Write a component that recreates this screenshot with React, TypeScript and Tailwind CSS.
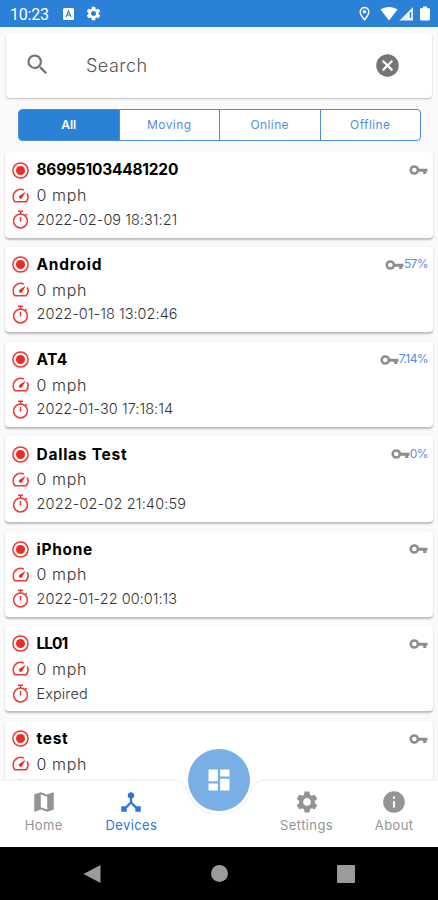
import {
  MdCancel,
  MdDashboard,
  MdDeviceHub,
  MdInfo,
  MdMap,
  MdSearch,
  MdSettings,
} from "react-icons/md";

interface Device {
  name: string;
  time: string;
  battery?: string;
  nameClass: string;
  timeClass: string;
}

const devices: Device[] = [
  { name: "869951034481220", time: "2022-02-09 18:31:21", nameClass: "tracking-[-0.23px]", timeClass: "tracking-[0.03px]" },
  { name: "Android", time: "2022-01-18 13:02:46", battery: "57%", nameClass: "tracking-[0.75px]", timeClass: "tracking-[0.03px]" },
  { name: "AT4", time: "2022-01-30 17:18:14", battery: "7.14%", nameClass: "tracking-[0.4px]", timeClass: "tracking-[0.03px]" },
  { name: "Dallas Test", time: "2022-02-02 21:40:59", battery: "0%", nameClass: "tracking-[0.75px]", timeClass: "tracking-[0.15px]" },
  { name: "iPhone", time: "2022-01-22 00:01:13", nameClass: "tracking-[0.7px]", timeClass: "tracking-[0.03px]" },
  { name: "LL01", time: "Expired", nameClass: "tracking-[-1px]", timeClass: "tracking-[0.1px]" },
  { name: "test", time: "2022-01-22 00:01:13", nameClass: "tracking-[0.7px]", timeClass: "tracking-[0.03px]" },
];

function StatusIcon() {
  return (
    <svg width="19" height="19" viewBox="0 0 19 19" fill="none">
      <circle cx="9.500" cy="9.500" r="7.600" stroke="#ee3a34" strokeWidth="1.500" />
      <circle cx="9.500" cy="9.500" r="4.500" fill="#ee2a24" />
    </svg>
  );
}

function SpeedIcon() {
  return (
    <svg width="19" height="19" viewBox="0 0 19 19" fill="none" stroke="#ee3a34" strokeWidth="1.600">
      <path d="M12.800 4.100A7.500 7.500 0 0 0 3.900 15.700H15.100A7.500 7.500 0 0 0 16.200 7.400" strokeLinejoin="round" />
      <path d="M14.800 5.800L10.900 12.200A1.700 1.700 0 1 1 8.500 9.800z" fill="#ee2a24" stroke="none" />
    </svg>
  );
}

function TimerIcon() {
  return (
    <svg width="19" height="19" viewBox="0 0 19 19" fill="none" stroke="#ee3a34" strokeWidth="1.500">
      <circle cx="9.500" cy="11" r="6.900" />
      <path d="M7 1.300H12M9.500 1.500V4M9.500 7V11.500M14.200 5.500L15.700 4" />
    </svg>
  );
}

function KeyIcon() {
  return (
    <svg width="19" height="12" viewBox="0 0 19 12" fill="none">
      <circle cx="5.300" cy="6" r="3.600" stroke="#8d8d8d" strokeWidth="2.500" />
      <path d="M9 4.700H18.500V7.700H17.300V10H14.200V7.700H9z" fill="#8d8d8d" />
    </svg>
  );
}

function StatusBar() {
  return (
    <div className="h-[27px] shrink-0 bg-[#2b80d8] text-white flex items-center pl-[10px] pr-2">
      <span className="font-[Roboto] text-[16px] leading-none w-[53px] pt-[2px] tracking-[-0.2px]">10:23</span>
      <svg width="11" height="12" viewBox="0 0 11 12">
        <rect width="11" height="12" rx="1.5" fill="white" />
        <path d="M3 9L5.5 3L8 9M4 7H7" stroke="#2b80d8" strokeWidth="1.1" fill="none" />
      </svg>
      <MdSettings size={17} className="ml-[11px]" />
      <svg width="71" height="16" viewBox="0 0 71 16" className="ml-auto">
        <path d="M5.500 1.500a4.300 4.300 0 0 1 4.300 4.300c0 3-4.300 7.900-4.300 7.900s-4.300-4.900-4.300-7.900a4.300 4.300 0 0 1 4.300-4.300z" fill="none" stroke="white" strokeWidth="1.500" />
        <circle cx="5.500" cy="5.800" r="1.800" fill="white" />
        <path d="M21.500 3.600C26 .1 34 .1 38.500 3.600L30 14.500z" fill="white" />
        <path d="M54 1v13.500H40.500z" fill="white" fillOpacity=".9" />
        <path d="M51.500 6v6" stroke="#2b80d8" strokeWidth="1.400" />
        <path d="M64 .5h4V2h1.500q1.500 0 1.500 1.500V13q0 1.500-1.500 1.500h-7Q61 14.500 61 13V3.500Q61 2 62.500 2H64z" fill="white" />
      </svg>
    </div>
  );
}

function SearchBox() {
  return (
    <div className="mt-[6px] mx-[6px] h-[65px] shrink-0 bg-white rounded-[4px] shadow-[0_1px_2px_rgba(0,0,0,0.25)] flex items-center pl-[18px] pr-[31px]">
      <MdSearch size={27} className="text-[#757575] mt-[-2px]" />
      <span className="ml-[35px] text-[18px] font-light tracking-[0.5px] text-[#555]">Search</span>
      <MdCancel size={27} className="ml-auto text-[#757575]" />
    </div>
  );
}

function Tabs() {
  const tabs = ["All", "Moving", "Online", "Offline"];
  return (
    <div className="mt-[11px] ml-[18px] mr-[17px] h-[32px] shrink-0 flex rounded-[4px] border border-[#4a8bdc] bg-white overflow-hidden text-[12px]">
      {tabs.map((tab, i) => (
        <div
          key={tab}
          className={
            i === 0
              ? "flex-1 flex items-center justify-center bg-[#2b80d8] text-white font-semibold pb-[1px]"
              : "flex-1 flex items-center justify-center text-[#5b8bdd] border-l border-[#4a8bdc] tracking-[0.4px] pb-[1px]"
          }
        >
          {tab}
        </div>
      ))}
    </div>
  );
}

function DeviceCard({ device }: { device: Device }) {
  return (
    <div className="h-[85.500px] last:h-[110px] shrink-0 bg-white rounded-[4px] shadow-[0_1.500px_2px_rgba(0,0,0,0.25)] pl-[6px] pr-[5px] pt-[5.500px] flex justify-between">
      <div>
        <div className="flex items-center h-[25px]">
          <StatusIcon />
          <span className={`ml-[6.500px] text-[15.500px] font-bold text-black ${device.nameClass}`}>{device.name}</span>
        </div>
        <div className="flex items-center h-[25px]">
          <SpeedIcon />
          <span className="ml-[6.500px] text-[16px] font-light text-[#333] tracking-[0.6px]">0 mph</span>
        </div>
        <div className="flex items-center h-[24px]">
          <TimerIcon />
          <span className={`ml-[6.500px] text-[14.500px] font-light text-[#333] ${device.timeClass}`}>{device.time}</span>
        </div>
      </div>
      <div className="flex items-center h-[25px]">
        <KeyIcon />
        {device.battery && (
          <span className="text-[12px] leading-none text-[#5b8be0] tracking-[-0.6px] mb-[1px]">{device.battery}</span>
        )}
      </div>
    </div>
  );
}

function BottomNav() {
  const items = [
    { label: "Home", icon: MdMap },
    { label: "Devices", icon: MdDeviceHub },
    null,
    { label: "Settings", icon: MdSettings },
    { label: "About", icon: MdInfo },
  ];
  return (
    <div className="absolute bottom-0 left-0 w-full h-[67px]">
      <svg width="438" height="67" viewBox="0 0 438 67" className="absolute inset-0 overflow-visible">
        <path d="M0 0H172C181 0 184 3 187 11C193 26 204 34.500 219 34.500S245 26 251 11C254 3 257 0 266 0H438V67H0z" fill="white" />
        <path
          d="M0 0H172C181 0 184 3 187 11C193 26 204 34.500 219 34.500S245 26 251 11C254 3 257 0 266 0H438"
          fill="none"
          stroke="#f3f3f3"
          strokeWidth="1.500"
        />
      </svg>
      <div className="relative h-full flex">
        {items.map((item, i) =>
          item ? (
            <div
              key={item.label}
              className={`flex-1 flex flex-col items-center pt-[9px] ${i === 1 ? "text-[#2c74d8]" : "text-[#949494]"}`}
            >
              <item.icon size={26} />
              <span className="text-[13px] leading-[20px] tracking-[0.4px]">{item.label}</span>
            </div>
          ) : (
            <div key="gap" className="flex-1" />
          )
        )}
      </div>
      <div className="absolute left-[188px] top-[-31px] size-[62px] rounded-full bg-[#7aafe5] text-white flex items-center justify-center">
        <MdDashboard size={28} />
      </div>
    </div>
  );
}

function SystemNav() {
  return (
    <div className="h-[53px] shrink-0 bg-black flex items-center justify-around px-[29px]">
      <svg width="18" height="20" viewBox="0 0 18 20" className="relative right-px">
        <path d="M17.500 1v18L.5 10z" fill="#9b9b9b" />
      </svg>
      <div className="size-[17px] rounded-full bg-[#9b9b9b]" />
      <div className="size-[18px] rounded-[1px] bg-[#9b9b9b]" />
    </div>
  );
}

function App() {
  return (
    <div className="w-[438px] h-[900px] bg-[#fafafa] flex flex-col overflow-hidden font-[Inter,sans-serif]">
      <StatusBar />
      <div className="relative flex-1 min-h-0 flex flex-col">
        <SearchBox />
        <Tabs />
        <div className="flex-1 min-h-0 overflow-hidden mt-[8px] px-[5px] pt-[3px] flex flex-col gap-[9.300px]">
          {devices.map((device) => (
            <DeviceCard key={device.name} device={device} />
          ))}
        </div>
        <BottomNav />
      </div>
      <SystemNav />
    </div>
  );
}

export default App;
